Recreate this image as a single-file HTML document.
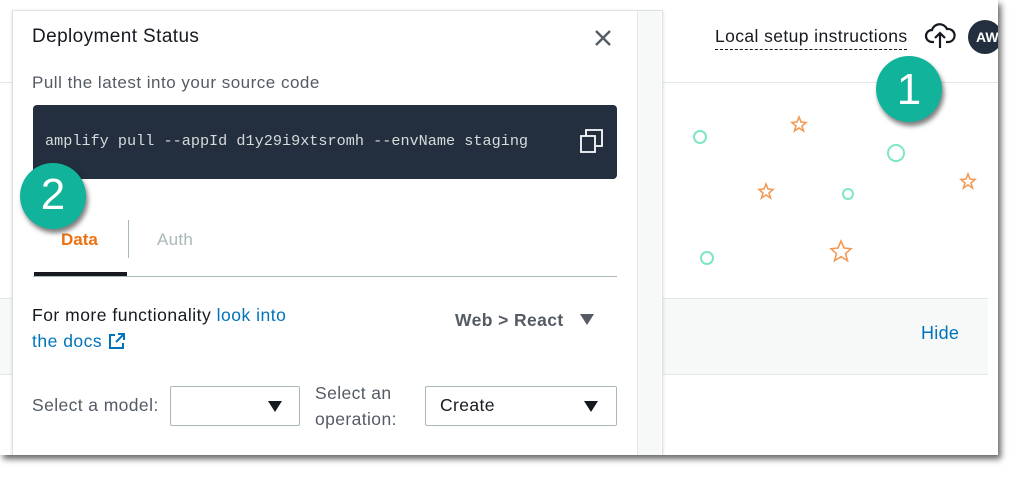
<!DOCTYPE html>
<html><head><style>
body{margin:0;width:1024px;height:480px;overflow:hidden;background:#fff;font-family:"Liberation Sans",sans-serif;position:relative}
.a{position:absolute;white-space:nowrap}
.page{left:0;top:0;width:998px;height:455px;background:#fff;overflow:hidden;box-shadow:3px 4px 6px rgba(0,0,0,.6)}
</style></head><body>
<div class="a page">
 <div class="a" style="left:0;top:82px;width:998px;height:1px;background:#e4e7e7"></div>
 <div class="a" style="left:0;top:298px;width:988px;height:77px;background:#f7f8f8;border-top:1px solid #e4e7e7;border-bottom:1px solid #e4e7e7;box-sizing:border-box"></div>
 <div class="a" style="left:921px;top:323px;font-size:18px;color:#0073bb;letter-spacing:.3px">Hide</div>
 <div class="a" style="left:715px;top:26px;font-size:17.5px;letter-spacing:.4px;color:#16191f;border-bottom:1.5px dashed #16191f;padding-bottom:2px">Local setup instructions</div>
 <svg class="a" style="left:924px;top:22px" width="32" height="28" viewBox="0 0 32 28"><path d="M10 20H8a6 6 0 0 1 0-12 8 8 0 0 1 15-1 6 6 0 0 1 2 13h-3M16 26V12M11 16l5-5 5 5" fill="none" stroke="#16191f" stroke-width="2.2"/></svg>
 <div class="a" style="left:968px;top:20px;width:34px;height:34px;border-radius:17px;background:#232f3e;color:#fff;font-weight:bold;font-size:14px;line-height:34px;text-indent:8px">AW</div>
 <svg class="a" style="left:680px;top:100px" width="320" height="180">
  <g fill="none" stroke="#7ee6c2" stroke-width="2"><circle cx="20" cy="37" r="6"/><circle cx="216" cy="53" r="8"/><circle cx="168" cy="94" r="5"/><circle cx="27" cy="158" r="6"/></g>
  <g fill="none" stroke="#f29a55" stroke-width="1.6">
   <path d="M119 17l2 5 5 .5-4 3.5 1.5 5-4.5-3-4.5 3 1.5-5-4-3.5 5-.5z"/>
   <path d="M86 84l2 5 5 .5-4 3.5 1.5 5-4.5-3-4.5 3 1.5-5-4-3.5 5-.5z"/>
   <path d="M288 74l2 5 5 .5-4 3.5 1.5 5-4.5-3-4.5 3 1.5-5-4-3.5 5-.5z"/>
   <path d="M161 141l3 7 7 .7-5.5 5 2 7-6.5-4-6.5 4 2-7-5.5-5 7-.7z"/>
  </g>
 </svg>
 <div class="a" style="left:12px;top:10px;width:649px;height:460px;background:#fff;border:1px solid #dfe2e2;box-shadow:0 1px 3px rgba(0,0,0,.15)"></div>
 <div class="a" style="left:637px;top:10px;width:1px;height:460px;background:#e4e7e7"></div>
 <div class="a" style="left:638px;top:11px;width:23px;height:460px;background:#f7f8f8"></div>
 <div class="a" style="left:32px;top:26px;font-size:19px;letter-spacing:.4px;color:#16191f">Deployment Status</div>
 <svg class="a" style="left:594px;top:29px" width="18" height="18"><path d="M2 2L16 16M16 2L2 16" stroke="#545b64" stroke-width="2.4"/></svg>
 <div class="a" style="left:32px;top:73px;font-size:17px;letter-spacing:.5px;color:#545b64">Pull the latest into your source code</div>
 <div class="a" style="left:33px;top:105px;width:584px;height:74px;background:#232f3e;border-radius:4px"></div>
 <div class="a" style="left:45px;top:132px;font-family:'Liberation Mono',monospace;font-size:15.2px;color:#d5dbdb">amplify pull --appId d1y29i9xtsromh --envName staging</div>
 <svg class="a" style="left:578px;top:127px" width="28" height="28"><path d="M8 9V3h16v16h-6M3 9h14v16H3z" fill="none" stroke="#fff" stroke-width="1.8"/></svg>
 <div class="a" style="left:61px;top:230px;font-size:17px;font-weight:bold;color:#ec7211">Data</div>
 <div class="a" style="left:128px;top:220px;width:1px;height:38px;background:#aab7b8"></div>
 <div class="a" style="left:157px;top:230px;font-size:17px;letter-spacing:.3px;color:#aab7b8">Auth</div>
 <div class="a" style="left:33px;top:276px;width:584px;height:1px;background:#aab7b8"></div>
 <div class="a" style="left:34px;top:272px;width:93px;height:4px;background:#16191f"></div>
 <div class="a" style="left:32px;top:302px;font-size:17.5px;letter-spacing:.5px;color:#16191f;line-height:26px;width:300px">For more functionality <span style="color:#0073bb">look into<br>the docs</span> <svg width="18" height="18" style="vertical-align:-3px"><path d="M7 3H2v13h13v-5M10 2h6v6M16 2L8 10" fill="none" stroke="#0073bb" stroke-width="2"/></svg></div>
 <div class="a" style="left:455px;top:310px;font-size:17.5px;letter-spacing:.4px;font-weight:bold;color:#545b64">Web &gt; React</div>
 <svg class="a" style="left:580px;top:314px" width="14" height="12"><path d="M0 0h14L7 11z" fill="#545b64"/></svg>
 <div class="a" style="left:32px;top:395px;font-size:17.5px;letter-spacing:.4px;color:#545b64">Select a model:</div>
 <div class="a" style="left:170px;top:386px;width:128px;height:38px;border:1px solid #aab7b8;border-radius:2px"></div>
 <svg class="a" style="left:268px;top:401px" width="14" height="12"><path d="M0 0h14L7 11z" fill="#16191f"/></svg>
 <div class="a" style="left:315px;top:380px;font-size:17.5px;letter-spacing:.4px;color:#545b64;line-height:26px">Select an<br>operation:</div>
 <div class="a" style="left:425px;top:386px;width:190px;height:38px;border:1px solid #aab7b8;border-radius:2px"></div>
 <div class="a" style="left:440px;top:395px;font-size:17.5px;letter-spacing:.4px;color:#16191f">Create</div>
 <svg class="a" style="left:584px;top:401px" width="14" height="12"><path d="M0 0h14L7 11z" fill="#16191f"/></svg>
</div>
<div class="a" style="left:20px;top:163px;width:66px;height:66px;border-radius:33px;background:#12b39b;box-shadow:2px 4px 5px rgba(0,0,0,.5);color:#fff;font-size:44px;text-align:center;line-height:64px">2</div>
<div class="a" style="left:876px;top:56px;width:66px;height:66px;border-radius:33px;background:#12b39b;box-shadow:2px 4px 5px rgba(0,0,0,.5);color:#fff;font-size:44px;text-align:center;line-height:68px">1</div>
</body></html>
